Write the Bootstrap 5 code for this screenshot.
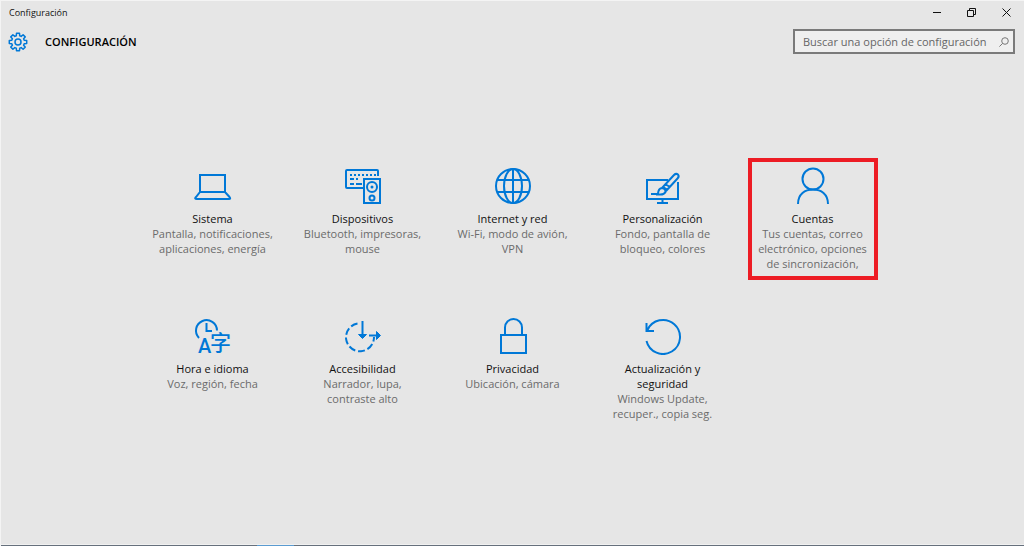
<!DOCTYPE html>
<html lang="es">
<head>
<meta charset="utf-8">
<meta name="viewport" content="width=device-width, initial-scale=1">
<title>Configuración</title>
<link href="https://cdn.jsdelivr.net/npm/bootstrap@5.3.0/dist/css/bootstrap.min.css" rel="stylesheet">
<style>
  body { background: #e6e6e6; color: #111; font-family: "Open Sans", "Noto Sans", "Noto Sans CJK SC", sans-serif; font-size: 11px; line-height: 15px; }
  .app-window { border-left: 1px solid #f4f4f4; border-top: 1px solid #f4f4f4; }
  .title-bar { height: 22px; padding-left: 8px; font-size: 9px; }
  .win-btn { width: 35px; height: 22px; }
  .page-head { padding: 6px 9px 0 6px; }
  .page-head h1 { font-size: 11px; line-height: 15px; font-weight: 600; color: #000; }
  .search-box { width: 222px; height: 25px; border: 2px solid #7a7a7a; background: #efefef; }
  .search-box input { font-size: 11px; line-height: 15px; color: #555; }
  .search-box input::placeholder { color: #666; opacity: 1; }
  .tiles { max-width: 750px; margin-top: 104px; row-gap: 28px; }
  .tile { width: 130px; min-height: 122px; border: 4px solid transparent; padding: 5px 0; color: #6b6b6b; }
  .tile-marked { border-color: #ed1c24; }
  .tile svg { width: 38px; height: 38px; margin-bottom: 6px; }
  .tile strong { font-weight: 400; color: #111; }
  .ico { fill: none; stroke: #0078d7; stroke-width: 2; }
  .ico text { fill: #0078d7; stroke: none; }
  .task-edge { height: 2px; border-top: 1px solid #f1f1f1; background: #66707c; }
  .task-edge span { width: 37px; margin-left: 25%; background: #5a9bd0; }
</style>
</head>
<body>
<div class="app-window d-flex flex-column min-vh-100">
  <header>
    <div class="title-bar d-flex align-items-center justify-content-between">
      <span>Configuración</span>
      <div class="d-flex">
        <button type="button" class="win-btn btn p-0 border-0 d-flex align-items-center justify-content-center" aria-label="Minimizar"><svg width="9" height="9" viewBox="0 0 9 9" stroke="#111" fill="none"><path d="M1 4.500H9"/></svg></button>
        <button type="button" class="win-btn btn p-0 border-0 d-flex align-items-center justify-content-center" aria-label="Restaurar"><svg width="9" height="9" viewBox="0 0 9 9" stroke="#111" fill="none"><path d="M.5 2.500H6.500V8.500H.5ZM2.500 2.500V.5H8.500V6.500H6.500"/></svg></button>
        <button type="button" class="win-btn btn p-0 border-0 d-flex align-items-center justify-content-center" aria-label="Cerrar"><svg width="9" height="9" viewBox="0 0 9 9" stroke="#111" fill="none"><path d="M.5.5L8.500 8.500M8.500.5L.5 8.500"/></svg></button>
      </div>
    </div>
    <div class="page-head d-flex align-items-center">
      <svg class="ico flex-shrink-0" width="22" height="22" viewBox="0 0 22 22" style="stroke-width:1.500" aria-hidden="true"><circle cx="11" cy="11" r="3"/><path stroke-linejoin="round" d="M9.300 4.800L9.500 2.300H12.500L12.700 4.800L14.200 5.400L16.100 3.800L18.200 5.900L16.600 7.800L17.200 9.300L19.700 9.500V12.500L17.200 12.700L16.600 14.200L18.200 16.100L16.100 18.200L14.200 16.600L12.700 17.200L12.500 19.700H9.500L9.300 17.200L7.800 16.600L5.900 18.200L3.800 16.100L5.400 14.200L4.800 12.700L2.300 12.500V9.500L4.800 9.300L5.400 7.800L3.800 5.900L5.900 3.800L7.800 5.400Z"/></svg>
      <h1 class="mb-0 ms-3">CONFIGURACIÓN</h1>
      <form class="search-box d-flex align-items-center ms-auto ps-2 pe-1" role="search">
        <input type="text" class="form-control p-0 border-0 rounded-0 bg-transparent shadow-none" placeholder="Buscar una opción de configuración" aria-label="Buscar una opción de configuración">
        <button type="submit" class="btn p-0 border-0 d-flex" aria-label="Buscar"><svg width="10" height="10" viewBox="0 0 10 10" stroke="#777" fill="none"><circle cx="6" cy="4" r="3.300"/><path d="M3.600 6.400L.4 9.600"/></svg></button>
      </form>
    </div>
  </header>

  <main class="flex-grow-1">
    <nav class="tiles row row-cols-2 row-cols-sm-3 row-cols-md-5 gx-0 mx-auto" aria-label="Categorías">
      <div class="col d-flex justify-content-center">
        <a href="#sistema" class="tile d-flex flex-column align-items-center text-center text-decoration-none">
          <svg class="ico" viewBox="0 0 38 38" aria-hidden="true"><path d="M6 25V8H31V25M6 25H31L35.500 30Q37 32 35 32H3Q0 32 2 30Z"/></svg>
          <strong>Sistema</strong><span>Pantalla, notificaciones, aplicaciones, energía</span>
        </a>
      </div>
      <div class="col d-flex justify-content-center">
        <a href="#dispositivos" class="tile d-flex flex-column align-items-center text-center text-decoration-none">
          <svg class="ico" viewBox="0 0 38 38" aria-hidden="true"><path d="M19 21H3Q2 21 2 20V4Q2 3 3 3H33Q34 3 34 4V9M20 36V12H36V36Z"/><path d="M6 8H32" stroke-dasharray="2 2"/><path d="M6 12H10M12 12H14M6 17H10M12 17H18"/><circle cx="28" cy="20" r="5"/><circle cx="28" cy="31" r="2.500"/><circle cx="28" cy="20" r="1.500" fill="#0078d7" stroke="none"/></svg>
          <strong>Dispositivos</strong><span>Bluetooth, impresoras, mouse</span>
        </a>
      </div>
      <div class="col d-flex justify-content-center">
        <a href="#red" class="tile d-flex flex-column align-items-center text-center text-decoration-none">
          <svg class="ico" viewBox="0 0 38 38" aria-hidden="true"><circle cx="19" cy="19" r="17"/><ellipse cx="19" cy="19" rx="9" ry="17"/><path d="M19 2V36M3 13H35M3 25H35"/></svg>
          <strong>Internet y red</strong><span>Wi-Fi, modo de avión, VPN</span>
        </a>
      </div>
      <div class="col d-flex justify-content-center">
        <a href="#personalizacion" class="tile d-flex flex-column align-items-center text-center text-decoration-none">
          <svg class="ico" viewBox="0 0 38 38" aria-hidden="true"><path d="M24 13H3V32H34V15M18.500 32V36M13 36H24"/><path d="M7 27H13Q14 27 14.500 24Q15.500 21 18.500 21Q22 22 21.500 25Q20 28 15 27.500H12M18 21L30 8Q32 6 34 7.500Q35.500 9.500 33.500 11.500L22 24M21 17L26 20M19 20L23 22.500"/></svg>
          <strong>Personalización</strong><span>Fondo, pantalla de bloqueo, colores</span>
        </a>
      </div>
      <div class="col d-flex justify-content-center">
        <a href="#cuentas" class="tile tile-marked d-flex flex-column align-items-center text-center text-decoration-none">
          <svg class="ico" viewBox="0 0 38 38" aria-hidden="true"><circle cx="19" cy="12" r="10.500"/><path d="M4 37C4 27 11 22.500 19 22.500S34 27 34 37"/></svg>
          <strong>Cuentas</strong><span>Tus cuentas, correo electrónico, opciones de sincronización,</span>
        </a>
      </div>
      <div class="col d-flex justify-content-center">
        <a href="#hora" class="tile d-flex flex-column align-items-center text-center text-decoration-none">
          <svg class="ico" viewBox="0 0 38 38" overflow="visible" aria-hidden="true"><path d="M5 21A10.500 10.500 0 1 1 23 13.500M12.500 6V14H18"/><text x="4" y="36" font-size="20" font-family="Roboto, sans-serif" font-weight="500">A</text><text x="16" y="33" font-size="21" font-weight="500" font-family="Noto Sans CJK SC, sans-serif">字</text></svg>
          <strong>Hora e idioma</strong><span>Voz, región, fecha</span>
        </a>
      </div>
      <div class="col d-flex justify-content-center">
        <a href="#accesibilidad" class="tile d-flex flex-column align-items-center text-center text-decoration-none">
          <svg class="ico" viewBox="0 0 38 38" aria-hidden="true"><path d="M13.500 6.500A14 14 0 1 0 30 20" stroke-dasharray="7 2.800"/><path d="M18.500 4V19M25 18.500H35"/><path d="M14.500 17.500H22.500L18.500 21.500ZM32.500 14.500L36.500 18.500L32.500 22.500Z" fill="#0078d7" stroke-width="1"/></svg>
          <strong>Accesibilidad</strong><span>Narrador, lupa, contraste alto</span>
        </a>
      </div>
      <div class="col d-flex justify-content-center">
        <a href="#privacidad" class="tile d-flex flex-column align-items-center text-center text-decoration-none">
          <svg class="ico" viewBox="0 0 38 38" aria-hidden="true"><path d="M7 18H32V36H7ZM11 18V10.500A8.500 8.500 0 0 1 28 10.500V18"/></svg>
          <strong>Privacidad</strong><span>Ubicación, cámara</span>
        </a>
      </div>
      <div class="col d-flex justify-content-center">
        <a href="#actualizacion" class="tile d-flex flex-column align-items-center text-center text-decoration-none">
          <svg class="ico" viewBox="0 0 38 38" aria-hidden="true"><path d="M2.500 24A17 17 0 1 0 3.500 13M2.500 6V14H10"/></svg>
          <strong>Actualización y seguridad</strong><span>Windows Update, recuper., copia seg.</span>
        </a>
      </div>
    </nav>
  </main>
  <div class="task-edge d-flex"><span></span></div>
</div>
<script src="https://cdn.jsdelivr.net/npm/bootstrap@5.3.0/dist/js/bootstrap.bundle.min.js"></script>
</body>
</html>
